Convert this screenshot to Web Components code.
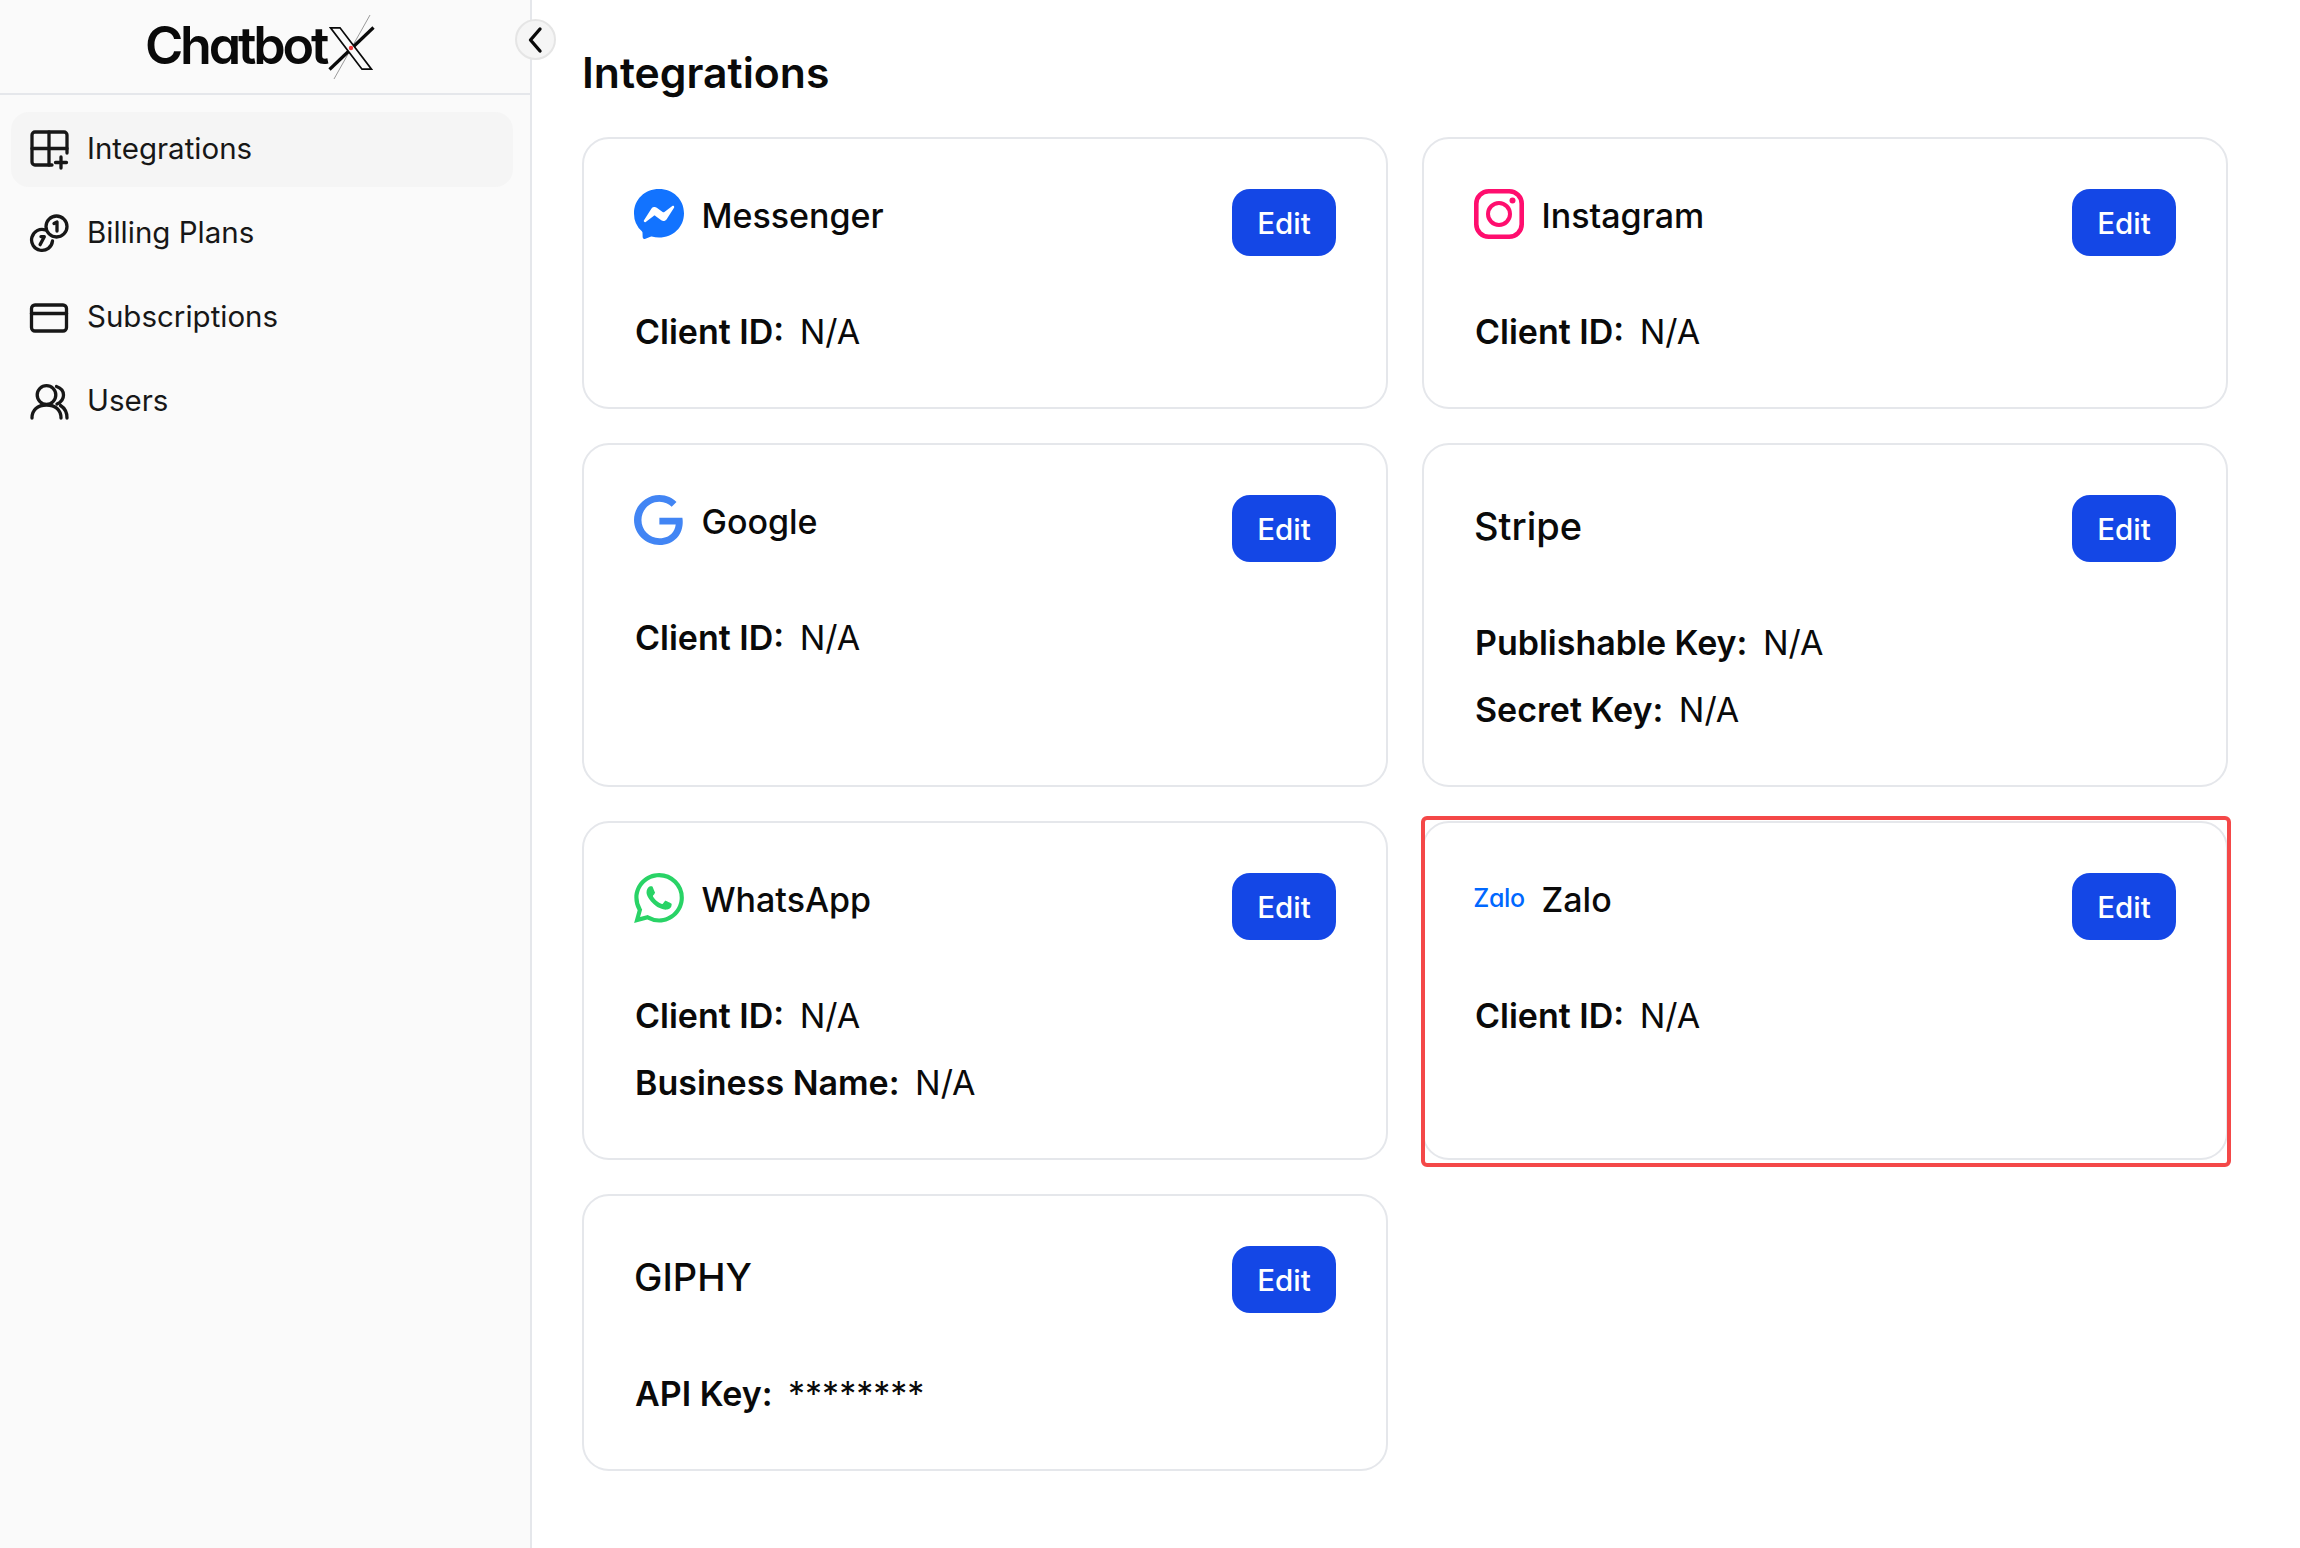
<!DOCTYPE html>
<html lang="en"><head><meta charset="utf-8"><title>Integrations</title>
<style>
html,body{margin:0;padding:0;height:100%;background:#fff;font-family:Inter,"Liberation Sans",sans-serif;color:#0a0a0a}
svg{display:block}
</style></head>
<body>
<app-shell>
  <side-bar slot="side">
    <brand-logo slot="logo"></brand-logo>
    <nav-item active label="Integrations"><svg slot="icon" width="40" height="40" viewBox="0 0 40 40" fill="none" stroke="#171717" stroke-width="3.300" stroke-linecap="round" stroke-linejoin="round"><path d="M23 35H6a3 3 0 0 1-3-3V5a3 3 0 0 1 3-3h29a3 3 0 0 1 3 3v18"/><path d="M20 2v33M3 18.500h35"/><path d="M32 27v11M26.500 32.500h11"/></svg></nav-item>
    <nav-item label="Billing Plans"><svg slot="icon" width="40" height="40" viewBox="0 0 40 40" fill="none" stroke="#171717" stroke-width="3.300" stroke-linecap="round" stroke-linejoin="round"><circle cx="27.500" cy="12.500" r="10.500"/><path d="M25 9.500l3-1.500v9"/><path d="M16.500 16A10.500 10.500 0 1 0 23.500 27"/><path d="M10.500 23.500l3-1.500v9" transform="rotate(28 13 26)"/></svg></nav-item>
    <nav-item label="Subscriptions"><svg slot="icon" width="40" height="40" viewBox="0 0 40 40" fill="none" stroke="#171717" stroke-width="3.300" stroke-linecap="round" stroke-linejoin="round"><rect x="2.500" y="7" width="35" height="26" rx="3.500"/><path d="M2.500 15.500h35"/></svg></nav-item>
    <nav-item label="Users"><svg slot="icon" width="40" height="40" viewBox="0 0 40 40" fill="none" stroke="#171717" stroke-width="3.300" stroke-linecap="round" stroke-linejoin="round"><circle cx="17.500" cy="13" r="9.300"/><path d="M3 36c0-8 5.500-13 14.500-13s14.500 5 14.500 13"/><path d="M27.500 4.500c4.500 1.500 7 4.500 7 8.500s-3 7.500-6.500 9"/><path d="M38 36c0-5.500-2.500-10-6.500-12.500"/></svg></nav-item>
    <collapse-toggle slot="toggle"></collapse-toggle>
  </side-bar>
  <page-main slot="main" heading="Integrations">
    <integration-card name="Messenger" icon>
      <svg slot="icon" width="50" height="50" viewBox="0 0 24 24" fill="#1273ff"><path d="M.001 11.639C.001 4.949 5.241 0 12.001 0S24 4.95 24 11.639c0 6.689-5.24 11.638-12 11.638-1.21 0-2.38-.16-3.47-.46a.96.96 0 00-.64.05l-2.39 1.05a.96.96 0 01-1.35-.85l-.07-2.14a.97.97 0 00-.32-.68A11.39 11.389 0 01.002 11.64zm8.32-2.19l-3.52 5.6c-.35.53.32 1.139.82.75l3.79-2.87c.26-.2.6-.2.87 0l2.8 2.1c.84.63 2.04.4 2.6-.48l3.52-5.6c.35-.53-.32-1.13-.82-.75l-3.79 2.87c-.25.2-.6.2-.86 0l-2.8-2.1a1.8 1.8 0 00-2.61.48z"/></svg>
      <key-value label="Client ID:" value="N/A"></key-value>
    </integration-card>
    <integration-card name="Instagram" icon>
      <svg slot="icon" width="50" height="50" viewBox="0 0 50 50" fill="none" stroke="#ff0e6e"><rect x="2.300" y="2.300" width="45.400" height="45.400" rx="12.500" stroke-width="4.600"/><circle cx="25" cy="25" r="11" stroke-width="4"/><circle cx="38.500" cy="11.500" r="3" fill="#ff0e6e" stroke="none"/></svg>
      <key-value label="Client ID:" value="N/A"></key-value>
    </integration-card>
    <integration-card name="Google" icon>
      <svg slot="icon" width="50" height="50" viewBox="0.300 0 24 24" fill="#4285f4"><path d="M12.480 10.920v3.280h7.840c-.24 1.840-.853 3.187-1.787 4.133-1.147 1.147-2.933 2.400-6.053 2.400-4.827 0-8.600-3.893-8.600-8.720s3.773-8.720 8.600-8.720c2.600 0 4.507 1.027 5.907 2.347l2.307-2.307C18.747 1.440 16.133 0 12.480 0 5.867 0 .307 5.387.307 12s5.560 12 12.173 12c3.573 0 6.267-1.173 8.373-3.360 2.160-2.160 2.840-5.213 2.840-7.667 0-.76-.053-1.467-.173-2.053H12.480z"/></svg>
      <key-value label="Client ID:" value="N/A"></key-value>
    </integration-card>
    <integration-card name="Stripe">
      <key-value label="Publishable Key:" value="N/A"></key-value>
      <key-value label="Secret Key:" value="N/A"></key-value>
    </integration-card>
    <integration-card name="WhatsApp" icon>
      <svg slot="icon" width="50" height="50" viewBox="0 0 24 24" fill="#29d366"><path d="M17.472 14.382c-.297-.149-1.758-.867-2.030-.967-.273-.099-.471-.148-.67.150-.197.297-.767.966-.94 1.164-.173.199-.347.223-.644.075-.297-.150-1.255-.463-2.390-1.475-.883-.788-1.480-1.761-1.653-2.059-.173-.297-.018-.458.130-.606.134-.133.298-.347.446-.520.149-.174.198-.298.298-.497.099-.198.050-.371-.025-.520-.075-.149-.669-1.612-.916-2.207-.242-.579-.487-.500-.669-.510-.173-.008-.371-.010-.570-.010-.198 0-.520.074-.792.372-.272.297-1.040 1.016-1.040 2.479 0 1.462 1.065 2.875 1.213 3.074.149.198 2.096 3.200 5.077 4.487.709.306 1.262.489 1.694.625.712.227 1.360.195 1.871.118.571-.085 1.758-.719 2.006-1.413.248-.694.248-1.289.173-1.413-.074-.124-.272-.198-.570-.347m-5.421 7.403h-.004a9.870 9.870 0 01-5.031-1.378l-.361-.214-3.741.982.998-3.648-.235-.374a9.860 9.860 0 01-1.510-5.260c.001-5.450 4.436-9.884 9.888-9.884 2.640 0 5.122 1.030 6.988 2.898a9.825 9.825 0 012.893 6.994c-.003 5.450-4.437 9.884-9.885 9.884m8.413-18.297A11.815 11.815 0 0012.050 0C5.495 0 .160 5.335.157 11.892c0 2.096.547 4.142 1.588 5.945L.057 24l6.305-1.654a11.882 11.882 0 005.683 1.448h.005c6.554 0 11.890-5.335 11.893-11.893a11.821 11.821 0 00-3.480-8.413z"/></svg>
      <key-value label="Client ID:" value="N/A"></key-value>
      <key-value label="Business Name:" value="N/A"></key-value>
    </integration-card>
    <integration-card name="Zalo" icon highlighted>
      <zalo-mark slot="icon"></zalo-mark>
      <key-value label="Client ID:" value="N/A"></key-value>
    </integration-card>
    <integration-card name="GIPHY">
      <key-value label="API Key:" value="********"></key-value>
    </integration-card>
  </page-main>
</app-shell>

<script>
const def=(name,css,html)=>{
  customElements.define(name,class extends HTMLElement{
    constructor(){super();this.attachShadow({mode:'open'})}
    connectedCallback(){
      const a=n=>this.getAttribute(n)||'';
      this.shadowRoot.innerHTML='<style>'+css+'</style>'+(typeof html==='function'?html(a):html);
    }
  });
};
def('app-shell',`:host{display:flex;min-height:1548px;align-items:stretch}`,`<slot name="side"></slot><slot name="main"></slot>`);
def('side-bar',`
:host{display:block;position:relative;flex:0 0 530px;width:530px;background:#fafafa;border-right:2px solid #e5e7eb}
.head{height:93px;border-bottom:2px solid #e5e7eb;display:flex;align-items:center;justify-content:flex-start;padding-left:145px}
nav{display:flex;flex-direction:column;gap:9px;padding:17px 17px 0 11px}
.toggle{position:absolute;left:515px;top:19px}
`,`<div class="head"><slot name="logo"></slot></div><nav><slot></slot></nav><div class="toggle"><slot name="toggle"></slot></div>`);
def('brand-logo',`
:host{display:flex;align-items:center;color:#0a0a0a}
.t{font:600 52px/60px Inter,"Liberation Sans",sans-serif;font-feature-settings:"cv11" 1;letter-spacing:-3.200px;margin-top:-2px}
svg{display:block;margin-left:0;margin-top:1px}
`,`<span class="t">Chatbot</span><svg width="52" height="68" viewBox="326 8 52 68" fill="none" aria-hidden="true"><path d="M370 10L334 74" stroke="#9a9a9a" stroke-width="1"/><path d="M373.500 22.500L329.500 64.500" stroke="#0a0a0a" stroke-width="3.200"/><path d="M330.500 22.800h9.500L371.500 64.200h-9.500z" stroke="#0a0a0a" stroke-width="1.700" fill="#fafafa"/><circle cx="351" cy="43" r="2.200" fill="#f43a3a"/></svg>`);
def('nav-item',`
:host{display:flex;align-items:center;gap:18px;height:75px;padding-left:18px;border-radius:18px;font:400 29.500px/40px Inter,"Liberation Sans",sans-serif;color:#171717}
:host([active]){background:#f5f5f5}
.i{width:40px;height:40px;flex:none}
.t{padding-bottom:3px}
`,a=>`<span class="i"><slot name="icon"></slot></span><span class="t">${a('label')}</span>`);
def('collapse-toggle',`
:host{display:flex;width:41px;height:41px;box-sizing:border-box;border:2px solid #e5e5e5;border-radius:50%;background:#f5f5f5;align-items:center;justify-content:center}
`,`<svg width="24" height="30" viewBox="0 0 24 30" fill="none" stroke="#0a0a0a" stroke-width="3.400" stroke-linecap="round" stroke-linejoin="round"><path d="M16 4L6.500 15L16 26"/></svg>`);
def('page-main',`
:host{display:block;flex:1;min-width:0;background:#fff;padding:43px 72px 0 50px}
h1{margin:0 0 34px;font:600 42.700px/60px Inter,"Liberation Sans",sans-serif;color:#0a0a0a}
.grid{display:grid;grid-template-columns:806px 806px;column-gap:34px;row-gap:34.500px;align-items:stretch}
`,a=>`<h1>${a('heading')}</h1><div class="grid"><slot></slot></div>`);
def('integration-card',`
:host{display:block;position:relative;box-sizing:border-box;background:#fff;border:2px solid #e5e7eb;border-radius:27px;padding:50px 50px 52.500px 50px}
.h{display:flex;justify-content:space-between;align-items:flex-start;height:67px;margin-bottom:53px}
:host(:not([icon])) .h{height:72px}
.l{display:flex;align-items:center;gap:17.500px;height:50px;font:500 34px/50px Inter,"Liberation Sans",sans-serif;color:#0a0a0a}
.n{padding-top:3px}
:host(:not([icon])) .l{height:58px;font-size:38px;line-height:58px}
.ic{width:50px;height:50px;flex:none}
:host(:not([icon])) .ic{display:none}
.b{display:flex;flex-direction:column;gap:22px}
.mark{display:none;position:absolute;left:-3.500px;top:-7px;right:-4.500px;bottom:-9px;border:4px solid #f44848;border-radius:6px;pointer-events:none}
:host([highlighted]) .mark{display:block}
`,a=>`<div class="h"><div class="l"><span class="ic"><slot name="icon"></slot></span><span class="n">${a('name')}</span></div><edit-button></edit-button></div><div class="b"><slot></slot></div><div class="mark"></div>`);
def('edit-button',`
:host{display:flex;width:104px;height:67px;align-items:center;justify-content:center;background:#1447e6;border-radius:18px;color:#fff;font:500 29.500px/40px Inter,"Liberation Sans",sans-serif}
`,`Edit`);
def('key-value',`
:host{display:flex;align-items:center;gap:15.500px;height:45px;padding-left:1px;font:400 34px/45px Inter,"Liberation Sans",sans-serif;color:#0a0a0a}
b{font-weight:600}
`,a=>`<b>${a('label')}</b><span>${a('value')}</span>`);
def('zalo-mark',`
:host{display:flex;width:50px;height:50px;align-items:center;justify-content:center;color:#0068ff;font:500 25px/50px Inter,"Liberation Sans",sans-serif;font-feature-settings:"cv11" 1;letter-spacing:-.3px;white-space:nowrap}
`,`Zalo`);
</script>
</body></html>
